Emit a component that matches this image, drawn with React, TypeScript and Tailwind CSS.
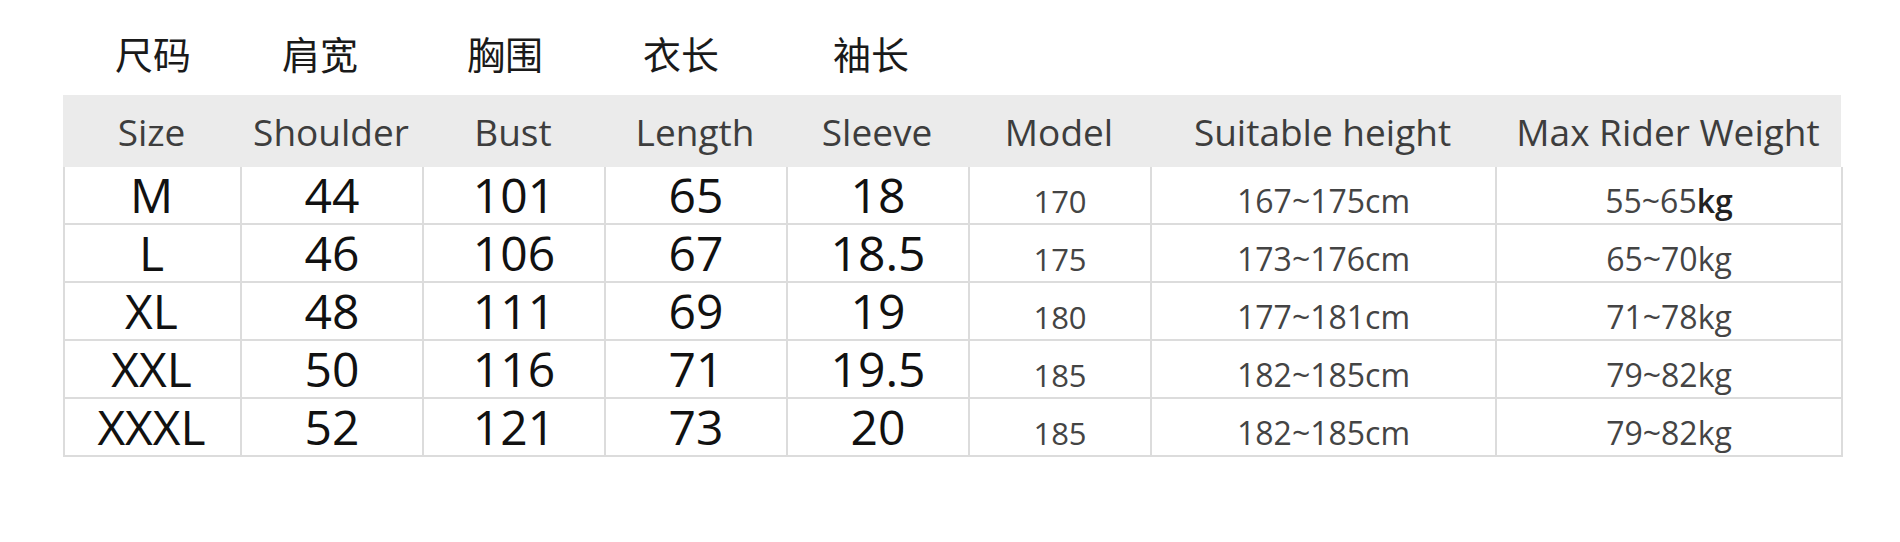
import React from 'react';

const cols = 'grid grid-cols-[177px_182px_182px_182px_182px_182px_345px_346px]';

const cnLabels: { text: string; cls: string }[] = [
  { text: '尺码', cls: 'pl-[3px]' },
  { text: '肩宽', cls: 'pr-[22px]' },
  { text: '胸围', cls: 'pr-[16px]' },
  { text: '衣长', cls: 'pr-[28px]' },
  { text: '袖长', cls: 'pr-[12px]' },
];

const headers = ['Size', 'Shoulder', 'Bust', 'Length', 'Sleeve', 'Model', 'Suitable height', 'Max Rider Weight'];

const rows = [
  ['M', '44', '101', '65', '18', '170', '167~175cm', '55~65', true],
  ['L', '46', '106', '67', '18.5', '175', '173~176cm', '65~70', false],
  ['XL', '48', '111', '69', '19', '180', '177~181cm', '71~78', false],
  ['XXL', '50', '116', '71', '19.5', '185', '182~185cm', '79~82', false],
  ['XXXL', '52', '121', '73', '20', '185', '182~185cm', '79~82', false],
] as const;

export default function App() {
  return (
    <div className="w-full h-[542px] bg-white text-[#111] font-['Open_Sans','Noto_Sans_CJK_SC',sans-serif]">
      {/* chinese labels above the table */}
      <div className={`${cols} pl-[63px] h-[95px]`}>
        {cnLabels.map((l) => (
          <div key={l.text} className={`flex items-end justify-center pb-[23px] ${l.cls}`}>
            <span className="text-[38px] leading-none text-[#1a1a1a] font-['Noto_Sans_CJK_SC',sans-serif]">{l.text}</span>
          </div>
        ))}
      </div>

      <div className="ml-[63px] w-[1778px]">
        <div className={`${cols} h-[72px] bg-[#ebebeb]`}>
          {headers.map((h) => (
            <div key={h} className="flex items-center justify-center text-[37px] leading-none text-[#3d3d3d] whitespace-nowrap">
              {h}
            </div>
          ))}
        </div>

        <div className="border-l-2 border-[#dcdcdc]">
          {rows.map((r, i) => (
            <div key={i} className={`${cols} h-[58px]`}>
              {r.slice(0, 5).map((v, j) => (
                <div
                  key={j}
                  className={`flex items-center justify-center border-r-2 border-b-2 border-[#dcdcdc] text-[48px] leading-none text-[#111] ${j === 0 ? '-ml-[2px]' : ''}`}
                >
                  {v as string}
                </div>
              ))}
              <div className="flex items-center justify-center pt-3 border-r-2 border-b-2 border-[#dcdcdc] text-[31px] leading-none text-[#444]">
                {r[5]}
              </div>
              <div className="flex items-center justify-center pt-3 border-r-2 border-b-2 border-[#dcdcdc] text-[32px] leading-none text-[#444]">
                {r[6]}
              </div>
              <div className="flex items-center justify-center pt-3 border-r-2 border-b-2 border-[#dcdcdc] text-[32px] leading-none text-[#444]">
                {r[7]}
                <span className={r[8] ? 'font-semibold text-[#222]' : ''}>kg</span>
              </div>
            </div>
          ))}
        </div>
      </div>
    </div>
  );
}
